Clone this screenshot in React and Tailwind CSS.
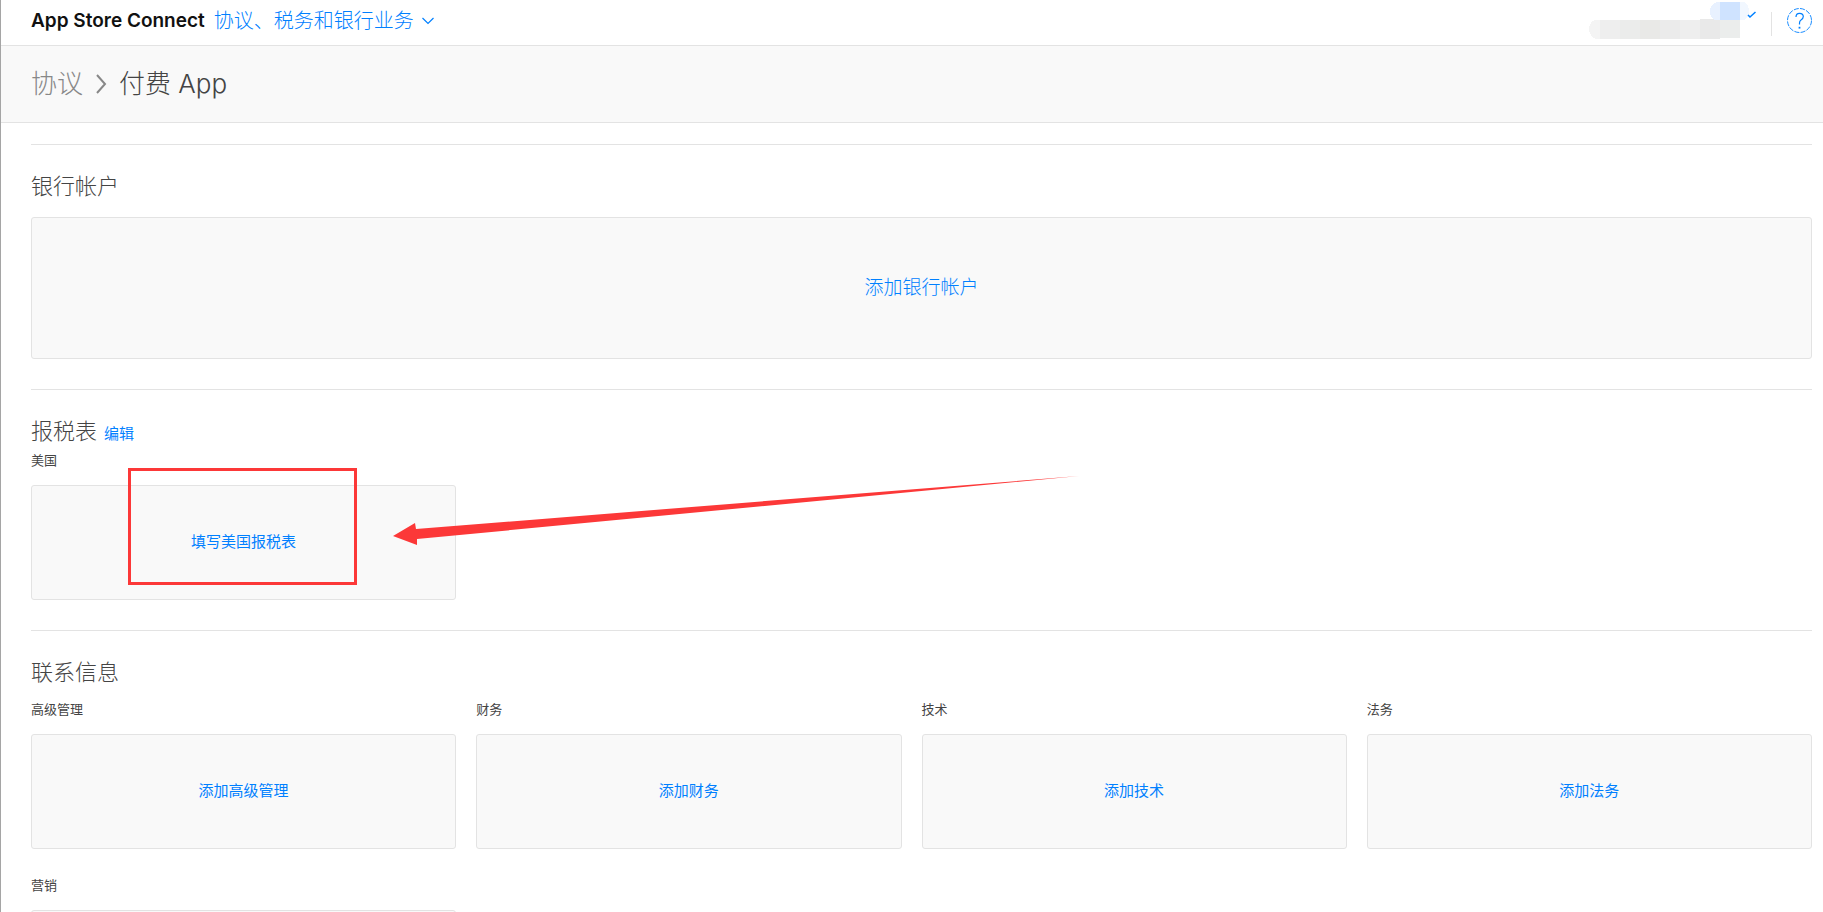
import React from 'react';

const fontStack = "font-['Inter','Noto_Sans_CJK_SC',sans-serif]";

const contacts = [
  { label: '高级管理', action: '添加高级管理' },
  { label: '财务', action: '添加财务' },
  { label: '技术', action: '添加技术' },
  { label: '法务', action: '添加法务' },
  { label: '营销', action: '添加营销' },
];

const Header = () => {
  return (
    <header className="flex h-[46px] items-start justify-between border-b border-[#e3e3e3] bg-white pl-[30px] pr-[11px]">
      <div className="flex h-[42px] items-center gap-[9px]">
        <h1 className="text-[19px] font-semibold text-[#111]">App Store Connect</h1>
        <button className="flex items-center gap-2 text-[20px] font-light text-[#0080ff]">
          协议、税务和银行业务
          <svg width="12" height="8" viewBox="0 0 12 8" fill="none" stroke="currentColor" strokeWidth="1.2">
            <path d="M0.5 1 L6 6.5 L11.5 1" />
          </svg>
        </button>
      </div>
      <div className="flex items-start">
        {/* account name, masked */}
        <button aria-label="账户">
          <svg width="168" height="40" viewBox="1588 0 168 40" shapeRendering="crispEdges">
            <path d="M1600 20 h-4 q-7 1 -7 10 q1 7 7 9 h4z" fill="#f4f4f4" />
            <rect x="1600" y="20" width="20" height="19" fill="#eeeeee" />
            <rect x="1620" y="20" width="20" height="19" fill="#ebeceb" />
            <rect x="1640" y="20" width="20" height="19" fill="#e9e9e7" />
            <rect x="1660" y="20" width="20" height="19" fill="#ebebeb" />
            <rect x="1680" y="20" width="20" height="19" fill="#eeeeee" />
            <rect x="1700" y="19" width="20" height="20" fill="#e9e9e9" />
            <rect x="1720" y="20" width="20" height="18" fill="#ebedec" />
            <path d="M1720 2 h-3 q-7 2 -7 10 q0 6 5 8 h5z" fill="#e8f1ff" />
            <rect x="1720" y="2" width="20" height="18" fill="#cfe3ff" />
            <path d="M1740 2 h4 q5 3 5 9 q0 7 -5 9 h-4z" fill="#f1f7ff" />
            <path d="M1748 15 l2 2 l5.500 -5" fill="none" stroke="#0080ff" strokeWidth="1.500" shapeRendering="auto" />
          </svg>
        </button>
        <div className="ml-[15px] mt-3 h-6 w-px bg-[#e3e3e3]" />
        <button aria-label="帮助" className="ml-[15px] mt-2 text-[#0080ff]">
          <svg width="25" height="25" viewBox="0 0 25 25" fill="none" stroke="currentColor">
            <circle cx="12.5" cy="12.5" r="12" strokeDasharray="5 1.3" strokeWidth="0.9" />
            <path d="M9 9 Q9 5.300 12.500 5.300 Q16.300 5.300 16.300 8.500 Q16.300 10.500 14 12 Q12.500 13 12.500 15 V16.500" strokeWidth="1.200" />
            <path d="M12.500 18.800 v1.800" strokeWidth="1.800" />
          </svg>
        </button>
      </div>
    </header>
  );
};

const Breadcrumb = () => {
  return (
    <nav className="flex h-[77px] items-center border-b border-[#e3e3e3] bg-[#f9f9f9] pb-0.5 pl-[30px] text-[26px] font-light">
      <a href="#agreements" className="text-[#888]">协议</a>
      <svg className="mx-3 mt-0.5" width="12" height="20" viewBox="0 0 12 20" fill="none" stroke="#888" strokeWidth="2">
        <path d="M2 1 L10 10 L2 19" />
      </svg>
      <span className="text-[#444]">付费 App</span>
    </nav>
  );
};

const AddBox = ({ children, large }) => {
  return (
    <div className={'flex items-center justify-center rounded-[3px] border border-[#e3e3e3] bg-[#f9f9f9] text-[#0080ff] ' + (large ? 'h-[142px] text-[19px] font-light' : 'h-[115px] text-[15px]')}>
      <button>{children}</button>
    </div>
  );
};

// Red frame and arrow pointing at the tax form button
const Callout = () => {
  return (
    <svg className="pointer-events-none absolute left-[97px] top-[78px]" width="952" height="120" viewBox="128 468 952 120" fill="#fc3838">
      <rect x="129.500" y="469.500" width="226" height="114" fill="none" stroke="#fc3838" strokeWidth="3" />
      <path d="M393 536 L415 523 L416 529 L1079 476 L417 539 L417 545 Z" />
    </svg>
  );
};

const App = () => {
  return (
    <div className={'min-h-screen border-l border-[#a5a5a5] bg-white text-[#444] ' + fontStack}>
      <Header />
      <Breadcrumb />
      <main className="pl-[30px] pr-[11px] pt-[21px]">
        <section className="border-t border-[#e3e3e3] pb-[30px] pt-[25px]">
          <h2 className="mb-[15px] text-[22px] font-light leading-8">银行帐户</h2>
          <AddBox large>添加银行帐户</AddBox>
        </section>

        <section className="relative border-t border-[#e3e3e3] pb-[30px] pt-[25px]">
          <div className="flex h-8 items-baseline gap-[7px]">
            <h2 className="text-[22px] font-light leading-8">报税表</h2>
            <button className="text-[15px] text-[#0080ff]">编辑</button>
          </div>
          <h3 className="mb-[15px] mt-[3px] text-[13px] leading-5">美国</h3>
          <div className="w-1/4 pr-5">
            <AddBox>填写美国报税表</AddBox>
          </div>
          <Callout />
        </section>

        <section className="border-t border-[#e3e3e3] pt-[25px]">
          <h2 className="text-[22px] font-light leading-8">联系信息</h2>
          <div className="mt-[11px] flex flex-wrap">
            {contacts.map((item, index) => (
              <div key={index} className={'mb-[26px] w-1/4 ' + (index % 4 == 3 ? '' : 'pr-5')}>
                <h3 className="mb-[15px] text-[13px] leading-5">{item.label}</h3>
                <AddBox>{item.action}</AddBox>
              </div>
            ))}
          </div>
        </section>
      </main>
    </div>
  );
};

export default App;
